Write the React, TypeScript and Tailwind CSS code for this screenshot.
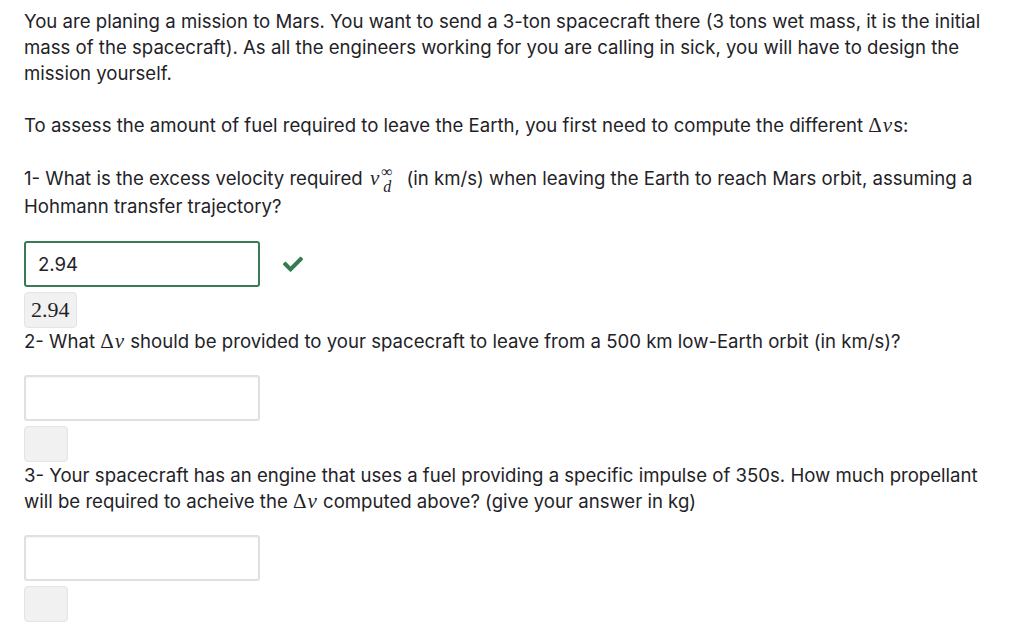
const serif = { fontFamily: '"Liberation Serif", "DejaVu Serif", serif' };

const Delta = () => (
  <span className="font-['Liberation_Serif',serif] text-[21px] leading-none">
    Δ<i className="ml-[1px] pr-[1px]">v</i>
  </span>
);

const VInf = () => (
  <span className="inline-flex items-baseline font-['Liberation_Serif',serif] text-[21px] leading-none mx-[2px]">
    <i>v</i>
    <span className="relative inline-block w-[18px] ml-[2px] text-[16px]">
      <span className="relative -top-[8px]">∞</span>
      <i className="absolute top-[7px] left-[2px]">d</i>
    </span>
  </span>
);

const Check = () => (
  <svg width="20" height="16" viewBox="0 0 512 400" className="text-[#367a52]">
    <path
      fill="currentColor"
      d="M173.9 389.3 7.5 222.9c-10-10-10-26.2 0-36.2l36.2-36.2c10-10 26.2-10 36.2 0L192 262.6 432.1 22.5c10-10 26.2-10 36.2 0l36.2 36.2c10 10 10 26.2 0 36.2L210.1 389.3c-10 10-26.2 10-36.2 0z"
    />
  </svg>
);

const EmptyInput = () => (
  <div className="mt-[21px] w-[236px] h-[46px] rounded-[3px] border-2 border-[#e0e0e0] bg-white shadow-[inset_0_1px_2px_rgba(0,0,0,0.05)]" />
);

const EmptyFeedback = () => (
  <div className="mt-[5px] w-[44px] h-[36px] rounded-[4px] border border-[#e4e4e4] bg-[#f1f1f1]" />
);

export default function App() {
  return (
    <div className="min-h-[628px] bg-white px-6 pt-2 text-[18.6px] leading-[26px] text-[#1f2328] font-['Inter',sans-serif] overflow-hidden">
      <div className="max-w-[976px]">
        <p>
          You are planing a mission to Mars. You want to send a 3-ton spacecraft there (3 tons wet mass, it is the initial
          mass of the spacecraft). As all the engineers working for you are calling in sick, you will have to design the
          mission yourself.
        </p>
        <p className="mt-[26px]">
          To assess the amount of fuel required to leave the Earth, you first need to compute the different <Delta />s:
        </p>

        <p className="mt-[26px] leading-[28px]">
          1- What is the excess velocity required <VInf /> (in km/s) when leaving the Earth to reach Mars orbit, assuming a
          Hohmann transfer trajectory?
        </p>
        <div className="mt-[21px] flex items-center gap-[23px]">
          <div className="w-[236px] h-[46px] rounded-[3px] border-2 border-[#3a7a55] bg-white flex items-center px-[12px]">
            2.94
          </div>
          <Check />
        </div>
        <div
          className="mt-[5px] inline-flex items-center h-[36px] px-[6px] rounded-[4px] border border-[#e4e4e4] bg-[#f1f1f1] text-[22px]"
          style={serif}
        >
          2.94
        </div>

        <p>
          2- What <Delta /> should be provided to your spacecraft to leave from a 500 km low-Earth orbit (in km/s)?
        </p>
        <EmptyInput />
        <EmptyFeedback />

        <p>
          3- Your spacecraft has an engine that uses a fuel providing a specific impulse of 350s. How much propellant
          will be required to acheive the <Delta /> computed above? (give your answer in kg)
        </p>
        <EmptyInput />
        <EmptyFeedback />
      </div>
    </div>
  );
}
